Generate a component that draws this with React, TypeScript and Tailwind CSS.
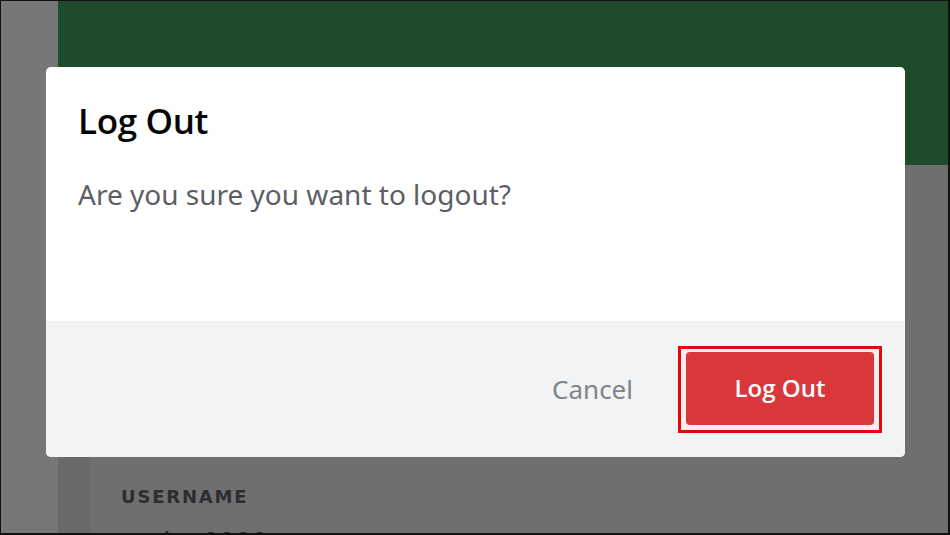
import React from 'react';

const font = { fontFamily: '"Noto Sans", "Open Sans", sans-serif' };

const App: React.FC = () => {
  return (
    <div
      className="relative w-[950px] h-[535px] overflow-hidden border-t border-l border-r-2 border-b-2 border-[#111] bg-[#6f6f6f] flex"
      style={font}
    >
      {/* Sidebar behind the dim */}
      <div className="w-[57px] shrink-0 bg-[#777777]" />

      {/* Settings page behind the dim */}
      <div className="flex-1 flex flex-col">
        <div className="h-[164px] shrink-0 bg-[#1e4b2b]" />
        <div className="flex-1 flex">
          <div className="w-[32px] shrink-0 bg-[#69696b]" />
          <div className="flex-1 pl-[31px] pt-[323px]">
            <div className="font-['DejaVu_Sans',sans-serif] text-[18px] font-bold tracking-[0.1em] text-[#2c2d31] leading-none">
              USERNAME
            </div>
            <div className="mt-[21px] text-[28px] text-[#2c2d31] leading-none whitespace-nowrap">ruslan2290</div>
          </div>
        </div>
      </div>

      {/* Modal */}
      <div className="absolute left-[45px] top-[66px] w-[859px] h-[390px] rounded-[5px] overflow-hidden bg-white flex flex-col">
        <div className="flex-1 px-[32px] pt-[30px]">
          <h1 className="font-['Open_Sans',sans-serif] text-[35px] font-semibold text-[#060607] leading-[48px] tracking-[-0.01em]">
            Log Out
          </h1>
          <p className="mt-[29px] text-[28px] text-[#5c5e66] leading-[40px]">Are you sure you want to logout?</p>
        </div>
        <div className="h-[136px] shrink-0 bg-[#f2f3f5] flex items-center justify-end pr-[23px] gap-[45px]">
          <button className="text-[26px] text-[#80848e] leading-none">Cancel</button>
          <div className="border-[3px] border-[#e3070f] bg-[#fdeeee] px-[5px] pt-[3px] pb-[5px]">
            <button className="w-[188px] h-[73px] rounded-[4px] bg-[#da373c] text-white text-[24px] font-['Open_Sans',sans-serif] font-semibold leading-none">
              Log Out
            </button>
          </div>
        </div>
      </div>
    </div>
  );
};

export default App;
